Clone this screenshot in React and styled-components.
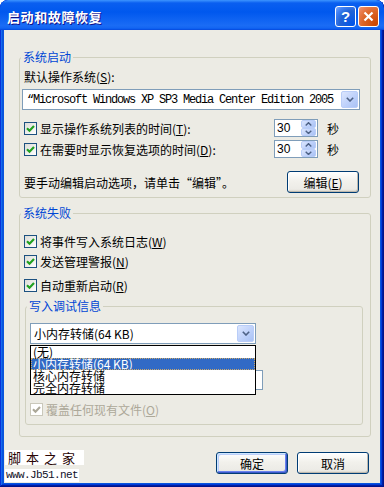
import React from 'react';
import styled, { createGlobalStyle } from 'styled-components';

const GlobalStyle = createGlobalStyle`
  html, body { margin: 0; padding: 0; background: #fff; }
  body {
    font-family: "Noto Sans CJK SC", "Liberation Sans", sans-serif;
    font-size: 12px;
    color: #000;
  }
  * { box-sizing: border-box; }
`;

const Window = styled.div`
  width: 384px;
  height: 487px;
  display: flex;
  flex-direction: column;
  background: #0855dd;
  border-radius: 8px 8px 0 0;
  overflow: hidden;
  box-shadow: inset -1px -1px #00138c, inset 1px 1px #0831d9,
    inset -2px -2px #001ea0, inset 2px 2px #166aee,
    inset -3px -3px #003bda, inset 3px 3px #0855dd;
`;

const TitleBar = styled.div`
  height: 30px;
  flex: none;
  display: flex;
  align-items: center;
  padding: 2px 5px 0 7px;
  background: linear-gradient(180deg, #3d95ff 0%, #0a5ff0 10%, #0058ee 40%, #1a6cf5 85%, #1466f2 93%, #0b5df0 96%, #0646d8 100%);
  border-radius: 8px 8px 0 0;
`;

const Title = styled.div`
  flex: 1;
  color: #fff;
  font-weight: bold;
  font-size: 13px;
  letter-spacing: 0.6px;
  text-shadow: 1px 1px #0f1089;
`;

const CapButton = styled.div`
  width: 21px;
  height: 21px;
  margin-left: 2px;
  border: 1px solid #fff;
  border-radius: 3px;
  display: flex;
  align-items: center;
  justify-content: center;
  color: #fff;
  font-family: "Liberation Sans", sans-serif;
  font-weight: bold;
  font-size: 15px;
  background: ${p => p.$close
    ? 'radial-gradient(circle at 90% 90%, #cc4600 0%, #dc6527 55%, #e97d4f 80%, #f19a7a 100%)'
    : 'radial-gradient(circle at 90% 90%, #0054e9 0%, #2263d5 55%, #4282f5 80%, #82aaf8 100%)'};
`;

const Client = styled.div`
  flex: 1;
  margin: 0 4px 4px 4px;
  background: #ecebe4;
  display: flex;
  flex-direction: column;
  padding-top: 20px;
`;

const Group = styled.fieldset`
  margin: ${p => p.$mt || 0}px ${p => p.$mr || 9}px 0 ${p => p.$ml || 15}px;
  padding: 0 0 ${p => p.$pb || 4}px 0;
  border: 1px solid #d0d0bf;
  border-radius: 3px;
  min-width: 0;
`;

const Legend = styled.legend`
  margin-left: 1px;
  padding: 0 2px;
  color: #0046d5;
  font-size: 12px;
  line-height: 14px;
`;

const Text = styled.div`
  height: ${p => p.$h || 14}px;
  line-height: ${p => p.$h || 14}px;
  margin-top: ${p => p.$mt || 0}px;
  padding-left: ${p => p.$pl ?? 4}px;
  white-space: nowrap;
`;

const Row = styled.div`
  display: flex;
  align-items: center;
  height: ${p => p.$h || 16}px;
  margin-top: ${p => p.$mt || 0}px;
  padding-left: 4px;
  padding-right: ${p => p.$pr || 0}px;
  white-space: nowrap;
`;

const CheckLabel = styled.span`
  flex: 1;
  margin-left: ${p => p.$plain ? 0 : 3}px;
  color: ${p => p.$disabled ? '#aca899' : '#000'};
`;

const Box = styled.span`
  width: 13px;
  height: 13px;
  flex: none;
  border: 1px solid ${p => p.$disabled ? '#cac8bb' : '#1c5180'};
  background: ${p => p.$disabled ? '#fff' : 'linear-gradient(135deg, #dcdcd7 0%, #fff 100%)'};
  display: flex;
  align-items: center;
  justify-content: center;
`;

const Check = ({ disabled }) => (
  <Box $disabled={disabled}>
    <svg width="9" height="9" viewBox="0 0 9 9">
      <polyline points="1,4.2 3.5,6.7 8,2" fill="none"
        stroke={disabled ? '#aca899' : '#21a121'} strokeWidth="2.2" />
    </svg>
  </Box>
);

const Combo = styled.div`
  position: relative;
  width: ${p => p.$w}px;
  height: 21px;
  margin: ${p => p.$mt || 0}px 0 0 ${p => p.$ml || 0}px;
  border: 1px solid #7f9db9;
  background: #fff;
  display: flex;
  align-items: center;
`;

const ComboText = styled.div`
  flex: 1;
  overflow: hidden;
  white-space: nowrap;
  padding-left: ${p => p.$pl || 3}px;
  font-family: ${p => p.$mono ? '"Liberation Mono", monospace' : '"Noto Sans CJK SC", sans-serif'};
  font-size: 12px;
  letter-spacing: ${p => p.$mono ? '-1.2px' : '0'};
`;

const ArrowBtn = styled.div`
  width: 17px;
  height: 17px;
  margin-right: 1px;
  flex: none;
  border: 1px solid #b9cdf8;
  border-radius: 2px;
  background: linear-gradient(135deg, #dce6fd 0%, #c1d3fb 50%, #a9c2f5 100%);
  display: flex;
  align-items: center;
  justify-content: center;
`;

const Chevron = ({ up, size = 8 }) => (
  <svg width={size} height={size * 0.6} viewBox="0 0 10 6">
    <polyline points={up ? '1,5 5,1 9,5' : '1,1 5,5 9,1'} fill="none" stroke="#4d6185" strokeWidth="2" />
  </svg>
);

const DropList = styled.div`
  position: absolute;
  top: 21px;
  left: -1px;
  width: 226px;
  border: 1px solid #000;
  background: #fff;
  z-index: 2;
`;

const DropItem = styled.div`
  height: 12px;
  line-height: 12px;
  padding-left: 2px;
  font-size: 12px;
  white-space: nowrap;
  background: ${p => p.$sel ? '#316ac5' : '#fff'};
  color: ${p => p.$sel ? '#fff' : '#000'};
  outline: ${p => p.$sel ? '1px dotted #c9a86a' : 'none'};
  outline-offset: -1px;
`;

const Spinner = styled.div`
  width: 44px;
  height: 18px;
  flex: none;
  border: 1px solid #7f9db9;
  background: #fff;
  display: flex;
  align-items: center;
  padding-left: 2px;
  font-family: "Liberation Sans", sans-serif;
  font-size: 12px;
`;

const SpinValue = styled.span`
  flex: 1;
`;

const SpinBtns = styled.div`
  width: 15px;
  height: 16px;
  margin-right: 1px;
  display: flex;
  flex-direction: column;
`;

const SpinBtn = styled.div`
  flex: 1;
  border: 1px solid #b9cdf8;
  border-radius: 2px;
  background: linear-gradient(135deg, #dce6fd 0%, #c1d3fb 50%, #a9c2f5 100%);
  display: flex;
  align-items: center;
  justify-content: center;
`;

const Unit = styled.span`
  margin-left: 9px;
  flex: none;
`;

const TextField = styled.div`
  width: ${p => p.$w}px;
  height: 20px;
  margin-top: ${p => p.$mt || 0}px;
  border: 1px solid #7f9db9;
  background: #fff;
`;

const Button = styled.button`
  width: 72px;
  height: 22px;
  flex: none;
  margin-left: ${p => p.$ml || 0}px;
  padding: 0;
  font-family: "Noto Sans CJK SC", sans-serif;
  font-size: 12px;
  color: #000;
  border: 1px solid #003c74;
  border-radius: 3px;
  background: linear-gradient(180deg, #fff 0%, #f2f1ec 45%, #ecebe6 86%, #d6d0c5 100%);
  box-shadow: ${p => p.$default
    ? 'inset -1px -1px #3c59c8, inset 1px 1px #cee7ff, inset -2px -2px #6982ee, inset 2px 2px #bccefa'
    : 'inset -1px -1px #bcb8ae, inset 1px 1px #fff'};
`;

const Footer = styled.div`
  display: flex;
  align-items: flex-start;
  flex: 1;
  padding: 0 11px 0 1px;
`;

const Watermark = styled.div`
  margin-top: 13px;
  flex: 1;
  display: flex;
  flex-direction: column;
  align-items: flex-start;
`;

const MarkName = styled.div`
  background: #fff;
  padding: 0 4px 0 3px;
  height: 15px;
  line-height: 15px;
  font-size: 13px;
  letter-spacing: 5px;
  color: #2a0606;
  font-family: "Noto Sans CJK SC", serif;
`;

const MarkUrl = styled.div`
  margin-top: 4px;
  background: #fff;
  padding: 0 1px;
  height: 13px;
  line-height: 13px;
  font-family: "Liberation Mono", monospace;
  font-size: 11px;
  letter-spacing: -0.6px;
  color: #10102a;
`;

const ButtonRow = styled.div`
  margin-top: 15px;
  display: flex;
`;

const Inner = styled.div`
  padding-left: ${p => p.$pl || 0}px;
`;

const SpinBox = () => (
  <Spinner>
    <SpinValue>30</SpinValue>
    <SpinBtns>
      <SpinBtn><Chevron up size={7} /></SpinBtn>
      <SpinBtn><Chevron size={7} /></SpinBtn>
    </SpinBtns>
  </Spinner>
);

export default function App() {
  return (
    <>
      <GlobalStyle />
      <Window>
        <TitleBar>
          <Title>启动和故障恢复</Title>
          <CapButton>?</CapButton>
          <CapButton $close>
            <svg width="11" height="11" viewBox="0 0 11 11">
              <path d="M1.5 1.5 L9.5 9.5 M9.5 1.5 L1.5 9.5" stroke="#fff" strokeWidth="2.2" />
            </svg>
          </CapButton>
        </TitleBar>
        <Client>
          <Group>
            <Legend>系统启动</Legend>
            <Text $mt={6}>默认操作系统(<u>S</u>):</Text>
            <Combo $w={338} $mt={5} $ml={2}>
              <ComboText $mono $pl={4}>“Microsoft Windows XP SP3 Media Center Edition 2005</ComboText>
              <ArrowBtn><Chevron /></ArrowBtn>
            </Combo>
            <Row $h={18} $mt={9} $pr={31}>
              <Check />
              <CheckLabel>显示操作系统列表的时间(<u>T</u>):</CheckLabel>
              <SpinBox />
              <Unit>秒</Unit>
            </Row>
            <Row $h={18} $mt={3} $pr={31}>
              <Check />
              <CheckLabel>在需要时显示恢复选项的时间(<u>D</u>):</CheckLabel>
              <SpinBox />
              <Unit>秒</Unit>
            </Row>
            <Row $h={22} $mt={13} $pr={11}>
              <CheckLabel $plain>要手动编辑启动选项，请单击“编辑”。</CheckLabel>
              <Button>编辑(<u>E</u>)</Button>
            </Row>
          </Group>

          <Group $mt={8} $pb={11}>
            <Legend>系统失败</Legend>
            <Row $mt={13}>
              <Check />
              <CheckLabel>将事件写入系统日志(<u>W</u>)</CheckLabel>
            </Row>
            <Row $mt={4}>
              <Check />
              <CheckLabel>发送管理警报(<u>N</u>)</CheckLabel>
            </Row>
            <Row $mt={8}>
              <Check />
              <CheckLabel>自动重新启动(<u>R</u>)</CheckLabel>
            </Row>
            <Group $mt={6} $ml={5} $mr={7} $pb={7}>
              <Legend>写入调试信息</Legend>
              <Inner $pl={4}>
                <Combo $w={226} $mt={10}>
                  <ComboText>小内存转储(64 KB)</ComboText>
                  <ArrowBtn><Chevron /></ArrowBtn>
                  <DropList>
                    <DropItem>(无)</DropItem>
                    <DropItem $sel>小内存转储(64 KB)</DropItem>
                    <DropItem>核心内存转储</DropItem>
                    <DropItem>完全内存转储</DropItem>
                  </DropList>
                </Combo>
                <TextField $w={233} $mt={26} />
              </Inner>
              <Row $mt={11}>
                <Check disabled />
                <CheckLabel $disabled>覆盖任何现有文件(<u>O</u>)</CheckLabel>
              </Row>
            </Group>
          </Group>

          <Footer>
            <Watermark>
              <MarkName>脚本之家</MarkName>
              <MarkUrl>www.Jb51.net</MarkUrl>
            </Watermark>
            <ButtonRow>
              <Button $default>确定</Button>
              <Button $ml={9}>取消</Button>
            </ButtonRow>
          </Footer>
        </Client>
      </Window>
    </>
  );
}
